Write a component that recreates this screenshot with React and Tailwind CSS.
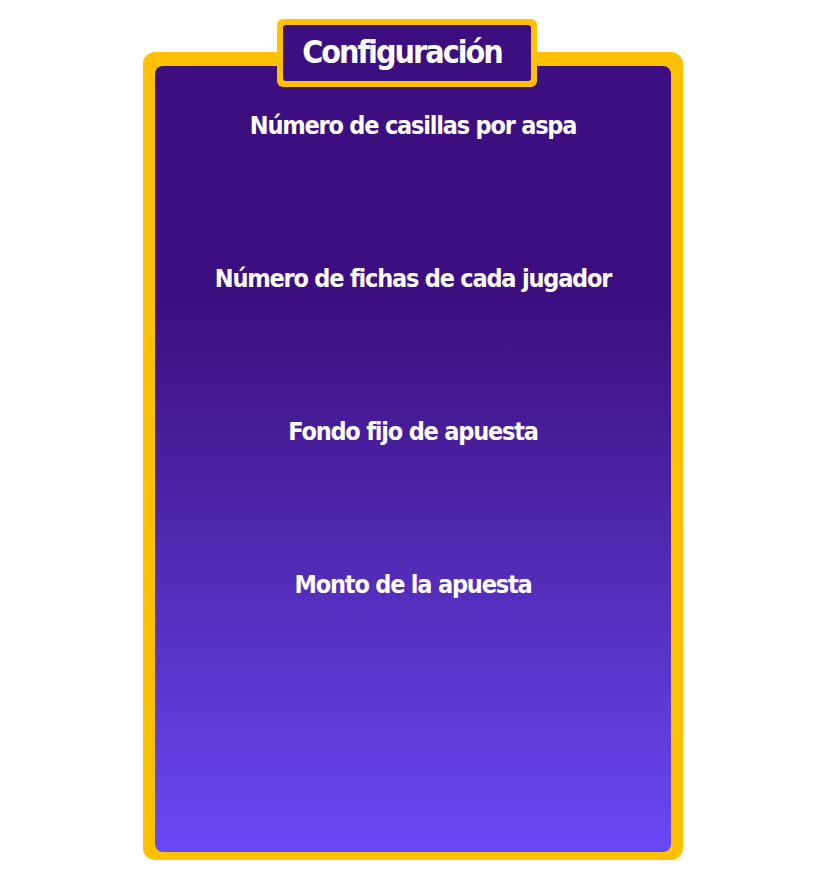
import React from "react";

const font = { fontFamily: '"DejaVu Sans Condensed", "Liberation Sans", sans-serif' };

export default function App() {
  const labels = [
    "Número de casillas por aspa",
    "Número de fichas de cada jugador",
    "Fondo fijo de apuesta",
    "Monto de la apuesta",
  ];
  return (
    <div className="w-[822px] h-[880px] bg-white pt-[52px] pl-[143px]" style={font}>
      <div className="relative w-[540px] h-[808px] bg-[#ffc000] rounded-[12px] pt-[14px] px-[12px] pb-[8px]">
        <div className="h-full rounded-[8px] bg-gradient-to-b from-[#3d0e7f] from-30% to-[#6849f6] flex flex-col items-center pt-[45px] gap-[123px]">
          {labels.map((l) => (
            <div key={l} className="h-[30px] leading-[30px] text-[25px] font-bold text-white tracking-[-1.2px]">
              {l}
            </div>
          ))}
        </div>
        <div className="absolute left-[134px] top-[-33px] w-[260px] h-[68px] bg-[#ffc000] rounded-[6px] p-[6px]">
          <div className="h-full rounded-[3px] bg-[#3d0e7f] flex items-center justify-center text-white font-bold text-[32px] leading-none pb-[2px] pr-[10px] tracking-[-2px]">
            Configuración
          </div>
        </div>
      </div>
    </div>
  );
}
